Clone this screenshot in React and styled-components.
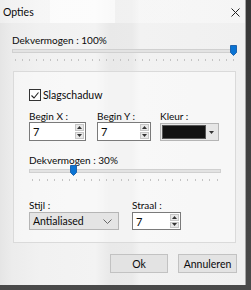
import styled, {createGlobalStyle} from 'styled-components';

const GlobalStyle = createGlobalStyle`
  html, body {
    margin: 0;
    padding: 0;
    background: #3b3b3b;
  }
  body {
    font-family: Lato, "Liberation Sans", sans-serif;
    font-size: 10px;
    color: #0a0a0a;
  }
`;

const Screen = styled.div`
  width: 251px;
  height: 290px;
  overflow: hidden;
  background: linear-gradient(#363636, #4a4a4a);
`;

const Dialog = styled.div`
  width: 246px;
  height: 285px;
  display: flex;
  flex-direction: column;
  background: linear-gradient(
    to right,
    #e5e5e5 0,
    #ececec 12px,
    #f1f1f1 40px,
    #f3f3f3 95px,
    #e9e9e9 110px,
    #eaeaea 132px,
    #f2f2f2 140px,
    #f0f0f0 100%
  );
  border-right: 1px solid #a5a5a5;
  box-sizing: border-box;
`;

const TitleBar = styled.div`
  height: 23px;
  display: flex;
  align-items: center;
  justify-content: space-between;
  padding: 0 5px 0 3px;
  background: linear-gradient(
    to right,
    rgba(255, 255, 255, 0.35) 0,
    rgba(255, 255, 255, 0.35) 50px,
    rgba(255, 255, 255, 0.75) 50px,
    rgba(255, 255, 255, 0.75) 115px,
    rgba(255, 255, 255, 0.35) 115px
  );
  font-size: 10.5px;
`;

const Close = styled.svg`
  margin-top: 1px;
`;

const Body = styled.div`
  flex: 1;
  display: flex;
  flex-direction: column;
  padding: 11px 8px 0 12px;
`;

const Label = styled.div`
  line-height: 12px;
  height: 12px;
  white-space: nowrap;
`;

const SliderWrap = styled.div`
  position: relative;
  width: ${({width}) => width}px;
  height: 17px;
  margin-top: ${({top}) => top || 0}px;
`;

const Track = styled.div`
  position: absolute;
  left: 0;
  right: 0;
  top: 4px;
  height: 2px;
  background: #e3e3e3;
  border: 1px solid #d0d0d0;
`;

const Thumb = styled.svg`
  position: absolute;
  top: 0;
`;

const Ticks = styled.div`
  position: absolute;
  left: 3px;
  right: 3px;
  top: 14px;
  height: 2px;
  display: flex;
  justify-content: space-between;
`;

const Tick = styled.span`
  width: 1px;
  height: 2px;
  background: #c4c4c4;
`;

const Slider = ({value, width, top, ticks}) => {
  const pos = Math.round(((width - 7) * value) / 100);
  return (
    <SliderWrap width={width} top={top}>
      <Track />
      <Thumb width="7" height="11" viewBox="0 0 7 11" style={{left: pos}}>
        <path d="M0.5 0.5 H6.5 V7.5 L3.5 10.5 L0.5 7.5 Z" fill="#0a74d4" stroke="#2164ad" />
      </Thumb>
      <Ticks>
        {Array.from({length: ticks}).map((_, i) => (
          <Tick key={i} />
        ))}
      </Ticks>
    </SliderWrap>
  );
};

const Group = styled.div`
  margin-top: 9px;
  margin-left: 1px;
  width: 223px;
  height: 172px;
  box-sizing: border-box;
  border: 1px solid #dadada;
  background: rgba(255, 255, 255, 0.45);
  padding: 17px 0 0 15px;
  display: flex;
  flex-direction: column;
`;

const Check = styled.label`
  display: flex;
  align-items: center;
  gap: 2px;
  height: 12px;
  font-size: 10.5px;
`;

const Box = styled.span`
  width: 10px;
  height: 10px;
  border: 1px solid #333;
  background: #fff;
  display: flex;
  align-items: center;
  justify-content: center;
`;

const Row = styled.div`
  display: flex;
  margin-top: ${({top}) => top}px;
`;

const Field = styled.div`
  display: flex;
  flex-direction: column;
  margin-left: ${({left}) => left || 0}px;
  gap: ${({gap}) => gap ?? 0}px;
`;

const Spin = styled.div`
  width: ${({width}) => width}px;
  height: ${({height}) => height}px;
  box-sizing: border-box;
  border: 1px solid #7a7a7a;
  background: #fff;
  display: flex;
  align-items: center;
  justify-content: space-between;
  padding-left: 3px;
  font-size: 11px;
`;

const SpinButtons = styled.div`
  width: 10px;
  height: 100%;
  display: flex;
  flex-direction: column;
  gap: 1px;
  padding: 1px 1px 1px 0;
  box-sizing: border-box;
`;

const SpinButton = styled.div`
  flex: 1;
  background: #e8e8e8;
  border: 1px solid #c6c6c6;
  display: flex;
  align-items: center;
  justify-content: center;
`;

const Arrow = ({up}) => (
  <svg width="5" height="3" viewBox="0 0 5 3">
    <path d={up ? 'M0 3 L2.5 0 L5 3 Z' : 'M0 0 L2.5 3 L5 0 Z'} fill="#333" />
  </svg>
);

const SpinBox = ({value, width, height}) => (
  <Spin width={width} height={height}>
    <span>{value}</span>
    <SpinButtons>
      <SpinButton>
        <Arrow up />
      </SpinButton>
      <SpinButton>
        <Arrow />
      </SpinButton>
    </SpinButtons>
  </Spin>
);

const ColorCombo = styled.div`
  width: 59px;
  height: 18px;
  box-sizing: border-box;
  border: 1px solid #b5b5b5;
  background: #e6e6e6;
  display: flex;
  align-items: center;
  padding: 1px;
  margin-top: 1px;
`;

const Swatch = styled.div`
  width: 44px;
  height: 14px;
  background: #111;
  border: 1px solid #555;
  box-sizing: border-box;
`;

const ComboArrow = styled.div`
  flex: 1;
  display: flex;
  justify-content: center;
`;

const Select = styled.div`
  width: 90px;
  height: 18px;
  box-sizing: border-box;
  border: 1px solid #b5b5b5;
  background: #e4e4e4;
  display: flex;
  align-items: center;
  justify-content: space-between;
  padding: 0 6px 0 3px;
  font-size: 10.5px;
`;

const Footer = styled.div`
  display: flex;
  justify-content: flex-end;
  gap: 10px;
  margin-top: 11px;
`;

const Button = styled.div`
  width: ${({width}) => width}px;
  height: 19px;
  box-sizing: border-box;
  border: 1px solid #c2c2c2;
  background: #e3e3e3;
  display: flex;
  align-items: center;
  justify-content: center;
  font-size: 10.5px;
`;

export default function App() {
  return (
    <Screen>
      <GlobalStyle />
      <Dialog>
        <TitleBar>
          <span>Opties</span>
          <Close width="9" height="9" viewBox="0 0 9 9">
            <path d="M0.5 0.5 L8.5 8.5 M8.5 0.5 L0.5 8.5" stroke="#222" strokeWidth="1" />
          </Close>
        </TitleBar>
        <Body>
          <Label>Dekvermogen : 100%</Label>
          <Slider value={100} width={225} top={-1} ticks={32} />
          <Group>
            <Check>
              <Box>
                <svg width="8" height="7" viewBox="0 0 8 7">
                  <path d="M0.5 3.5 L3 6 L7.5 0.5" fill="none" stroke="#222" strokeWidth="1.1" />
                </svg>
              </Box>
              Slagschaduw
            </Check>
            <Row top={9}>
              <Field>
                <Label>Begin X :</Label>
                <SpinBox value="7" width={57} height={19} />
              </Field>
              <Field left={11}>
                <Label>Begin Y :</Label>
                <SpinBox value="7" width={54} height={19} />
              </Field>
              <Field left={9}>
                <Label>Kleur :</Label>
                <ColorCombo>
                  <Swatch />
                  <ComboArrow>
                    <Arrow />
                  </ComboArrow>
                </ColorCombo>
              </Field>
            </Row>
            <Row top={13}>
              <Field>
                <Label>Dekvermogen : 30%</Label>
                <Slider value={22} width={192} top={-1} ticks={26} />
              </Field>
            </Row>
            <Row top={17}>
              <Field gap={1}>
                <Label>Stijl :</Label>
                <Select>
                  <span>Antialiased</span>
                  <svg width="9" height="5" viewBox="0 0 9 5">
                    <path d="M0.5 0.5 L4.5 4.5 L8.5 0.5" fill="none" stroke="#666" />
                  </svg>
                </Select>
              </Field>
              <Field left={13} gap={1}>
                <Label>Straal :</Label>
                <SpinBox value="7" width={49} height={18} />
              </Field>
            </Row>
          </Group>
          <Footer>
            <Button width={58}>Ok</Button>
            <Button width={59}>Annuleren</Button>
          </Footer>
        </Body>
      </Dialog>
    </Screen>
  );
}
